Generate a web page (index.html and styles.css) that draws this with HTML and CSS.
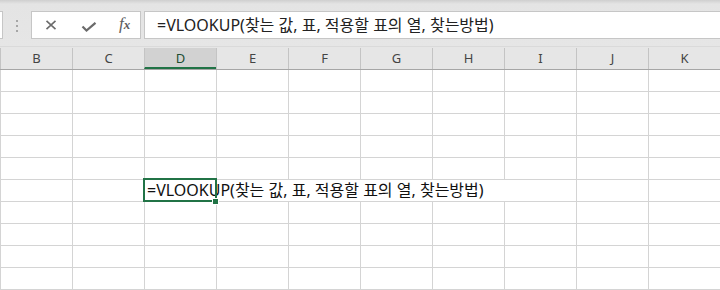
FILE: index.html
```html
<!DOCTYPE html>
<html lang="ko">
<head>
    <meta charset="UTF-8">
    <title>VLOOKUP</title>
    <link rel="stylesheet" href="styles.css">
</head>
<body>
    <div class="toolbar">
        <div class="name-box"></div>
        <div class="grip"><span></span><span></span><span></span></div>
        <div class="buttons">
            <svg class="icon" width="12" height="10" viewBox="0 0 12 10">
                <path d="M1.5 0.8 L10.5 9.2 M10.5 0.8 L1.5 9.2" stroke="#6b6b6b" stroke-width="1.6" fill="none"/>
            </svg>
            <svg class="icon" width="16" height="10" viewBox="0 0 16 10">
                <path d="M1.5 4.5 L5.5 8.5 L14.5 0.8" stroke="#6b6b6b" stroke-width="2.2" fill="none"/>
            </svg>
            <span class="fx">f<small>x</small></span>
        </div>
        <div class="formula">=VLOOKUP(찾는 값, 표, 적용할 표의 열, 찾는방법)</div>
    </div>

    <div class="sheet">
        <div class="row head">
            <div class="cell">B</div>
            <div class="cell">C</div>
            <div class="cell active">D</div>
            <div class="cell">E</div>
            <div class="cell">F</div>
            <div class="cell">G</div>
            <div class="cell">H</div>
            <div class="cell">I</div>
            <div class="cell">J</div>
            <div class="cell">K</div>
        </div>
        <div class="row"><div class="cell"></div><div class="cell"></div><div class="cell"></div><div class="cell"></div><div class="cell"></div><div class="cell"></div><div class="cell"></div><div class="cell"></div><div class="cell"></div><div class="cell"></div></div>
        <div class="row"><div class="cell"></div><div class="cell"></div><div class="cell"></div><div class="cell"></div><div class="cell"></div><div class="cell"></div><div class="cell"></div><div class="cell"></div><div class="cell"></div><div class="cell"></div></div>
        <div class="row"><div class="cell"></div><div class="cell"></div><div class="cell"></div><div class="cell"></div><div class="cell"></div><div class="cell"></div><div class="cell"></div><div class="cell"></div><div class="cell"></div><div class="cell"></div></div>
        <div class="row"><div class="cell"></div><div class="cell"></div><div class="cell"></div><div class="cell"></div><div class="cell"></div><div class="cell"></div><div class="cell"></div><div class="cell"></div><div class="cell"></div><div class="cell"></div></div>
        <div class="row"><div class="cell"></div><div class="cell"></div><div class="cell"></div><div class="cell"></div><div class="cell"></div><div class="cell"></div><div class="cell"></div><div class="cell"></div><div class="cell"></div><div class="cell"></div></div>
        <div class="row">
            <div class="cell"></div>
            <div class="cell"></div>
            <div class="cell selected"><span class="value">=VLOOKUP(찾는 값, 표, 적용할 표의 열, 찾는방법)</span></div>
            <div class="cell spill"></div>
            <div class="cell spill"></div>
            <div class="cell spill"></div>
            <div class="cell spill"></div>
            <div class="cell spill"></div>
            <div class="cell"></div>
            <div class="cell"></div>
        </div>
        <div class="row"><div class="cell"></div><div class="cell"></div><div class="cell"></div><div class="cell"></div><div class="cell"></div><div class="cell"></div><div class="cell"></div><div class="cell"></div><div class="cell"></div><div class="cell"></div></div>
        <div class="row"><div class="cell"></div><div class="cell"></div><div class="cell"></div><div class="cell"></div><div class="cell"></div><div class="cell"></div><div class="cell"></div><div class="cell"></div><div class="cell"></div><div class="cell"></div></div>
        <div class="row"><div class="cell"></div><div class="cell"></div><div class="cell"></div><div class="cell"></div><div class="cell"></div><div class="cell"></div><div class="cell"></div><div class="cell"></div><div class="cell"></div><div class="cell"></div></div>
        <div class="row"><div class="cell"></div><div class="cell"></div><div class="cell"></div><div class="cell"></div><div class="cell"></div><div class="cell"></div><div class="cell"></div><div class="cell"></div><div class="cell"></div><div class="cell"></div></div>
    </div>
</body>
</html>
```

FILE: styles.css
```css
body {
    margin: 0;
    width: 720px;
    height: 290px;
    overflow: hidden;
    background-color: #ffffff;
    font-family: 'Noto Sans', 'Noto Sans CJK KR', sans-serif;
}
.toolbar {
    height: 47px;
    box-sizing: border-box;
    padding-top: 11px;
    display: flex;
    align-items: flex-start;
    background: linear-gradient(#cfcfcf 0px, #e4e4e4 4px, #e6e6e6 100%);
    border-bottom: 1px solid #dadada;
}
.name-box {
    width: 2px;
    height: 26px;
    background-color: #ffffff;
    border: 1px solid #c6c6c6;
    border-left: none;
}
.grip {
    width: 2px;
    margin: 9px 13px 0 13px;
    display: flex;
    flex-direction: column;
    gap: 3px;
}
.grip span {
    width: 2px;
    height: 2px;
    background-color: #a6a6a6;
}
.buttons {
    width: 108px;
    height: 26px;
    background-color: #ffffff;
    border: 1px solid #c6c6c6;
    display: flex;
    align-items: center;
}
.icon:first-child {
    margin-left: 13px;
}
.icon:nth-child(2) {
    margin-left: 24px;
    margin-top: 4px;
}
.fx {
    margin-left: 22px;
    margin-top: -3px;
    font-family: 'Liberation Serif', serif;
    font-style: italic;
    font-size: 17px;
    color: #5e5e5e;
}
.fx small {
    font-size: 13px;
    font-weight: bold;
}
.formula {
    flex: 1;
    height: 26px;
    margin-left: 3px;
    padding-left: 12px;
    background-color: #ffffff;
    border: 1px solid #c6c6c6;
    border-right: none;
    font-size: 16px;
    line-height: 26px;
    color: #222222;
    white-space: nowrap;
}
.sheet {
    display: flex;
    flex-direction: column;
}
.row {
    display: flex;
    height: 22px;
    box-sizing: border-box;
    border-bottom: 1px solid #d4d4d4;
}
.cell {
    width: 72px;
    flex: none;
    box-sizing: border-box;
    border-left: 1px solid #d4d4d4;
    position: relative;
}
.head {
    height: 23px;
    background-color: #e6e6e6;
    border-bottom: 1px solid #a6a6a6;
}
.head .cell {
    border-left-color: #c4c4c4;
    margin-top: 1px;
    text-align: center;
    font-size: 13px;
    line-height: 20px;
    color: #444444;
}
.head .cell.active {
    background-color: #d2d2d2;
    border-bottom: 2px solid #217346;
    color: #1e4d32;
}
.spill {
    border-left-color: #ffffff;
}
.selected .value {
    position: absolute;
    left: 2px;
    top: 0;
    font-size: 16px;
    line-height: 21px;
    color: #111111;
    white-space: nowrap;
    z-index: 1;
}
.selected::before {
    content: "";
    position: absolute;
    left: -2px;
    top: -2px;
    width: 74px;
    height: 24px;
    box-sizing: border-box;
    border: 2px solid #217346;
    z-index: 2;
}
.selected::after {
    content: "";
    position: absolute;
    right: -3px;
    bottom: -4px;
    width: 5px;
    height: 5px;
    background-color: #217346;
    border: 1px solid #ffffff;
    z-index: 3;
}
```
